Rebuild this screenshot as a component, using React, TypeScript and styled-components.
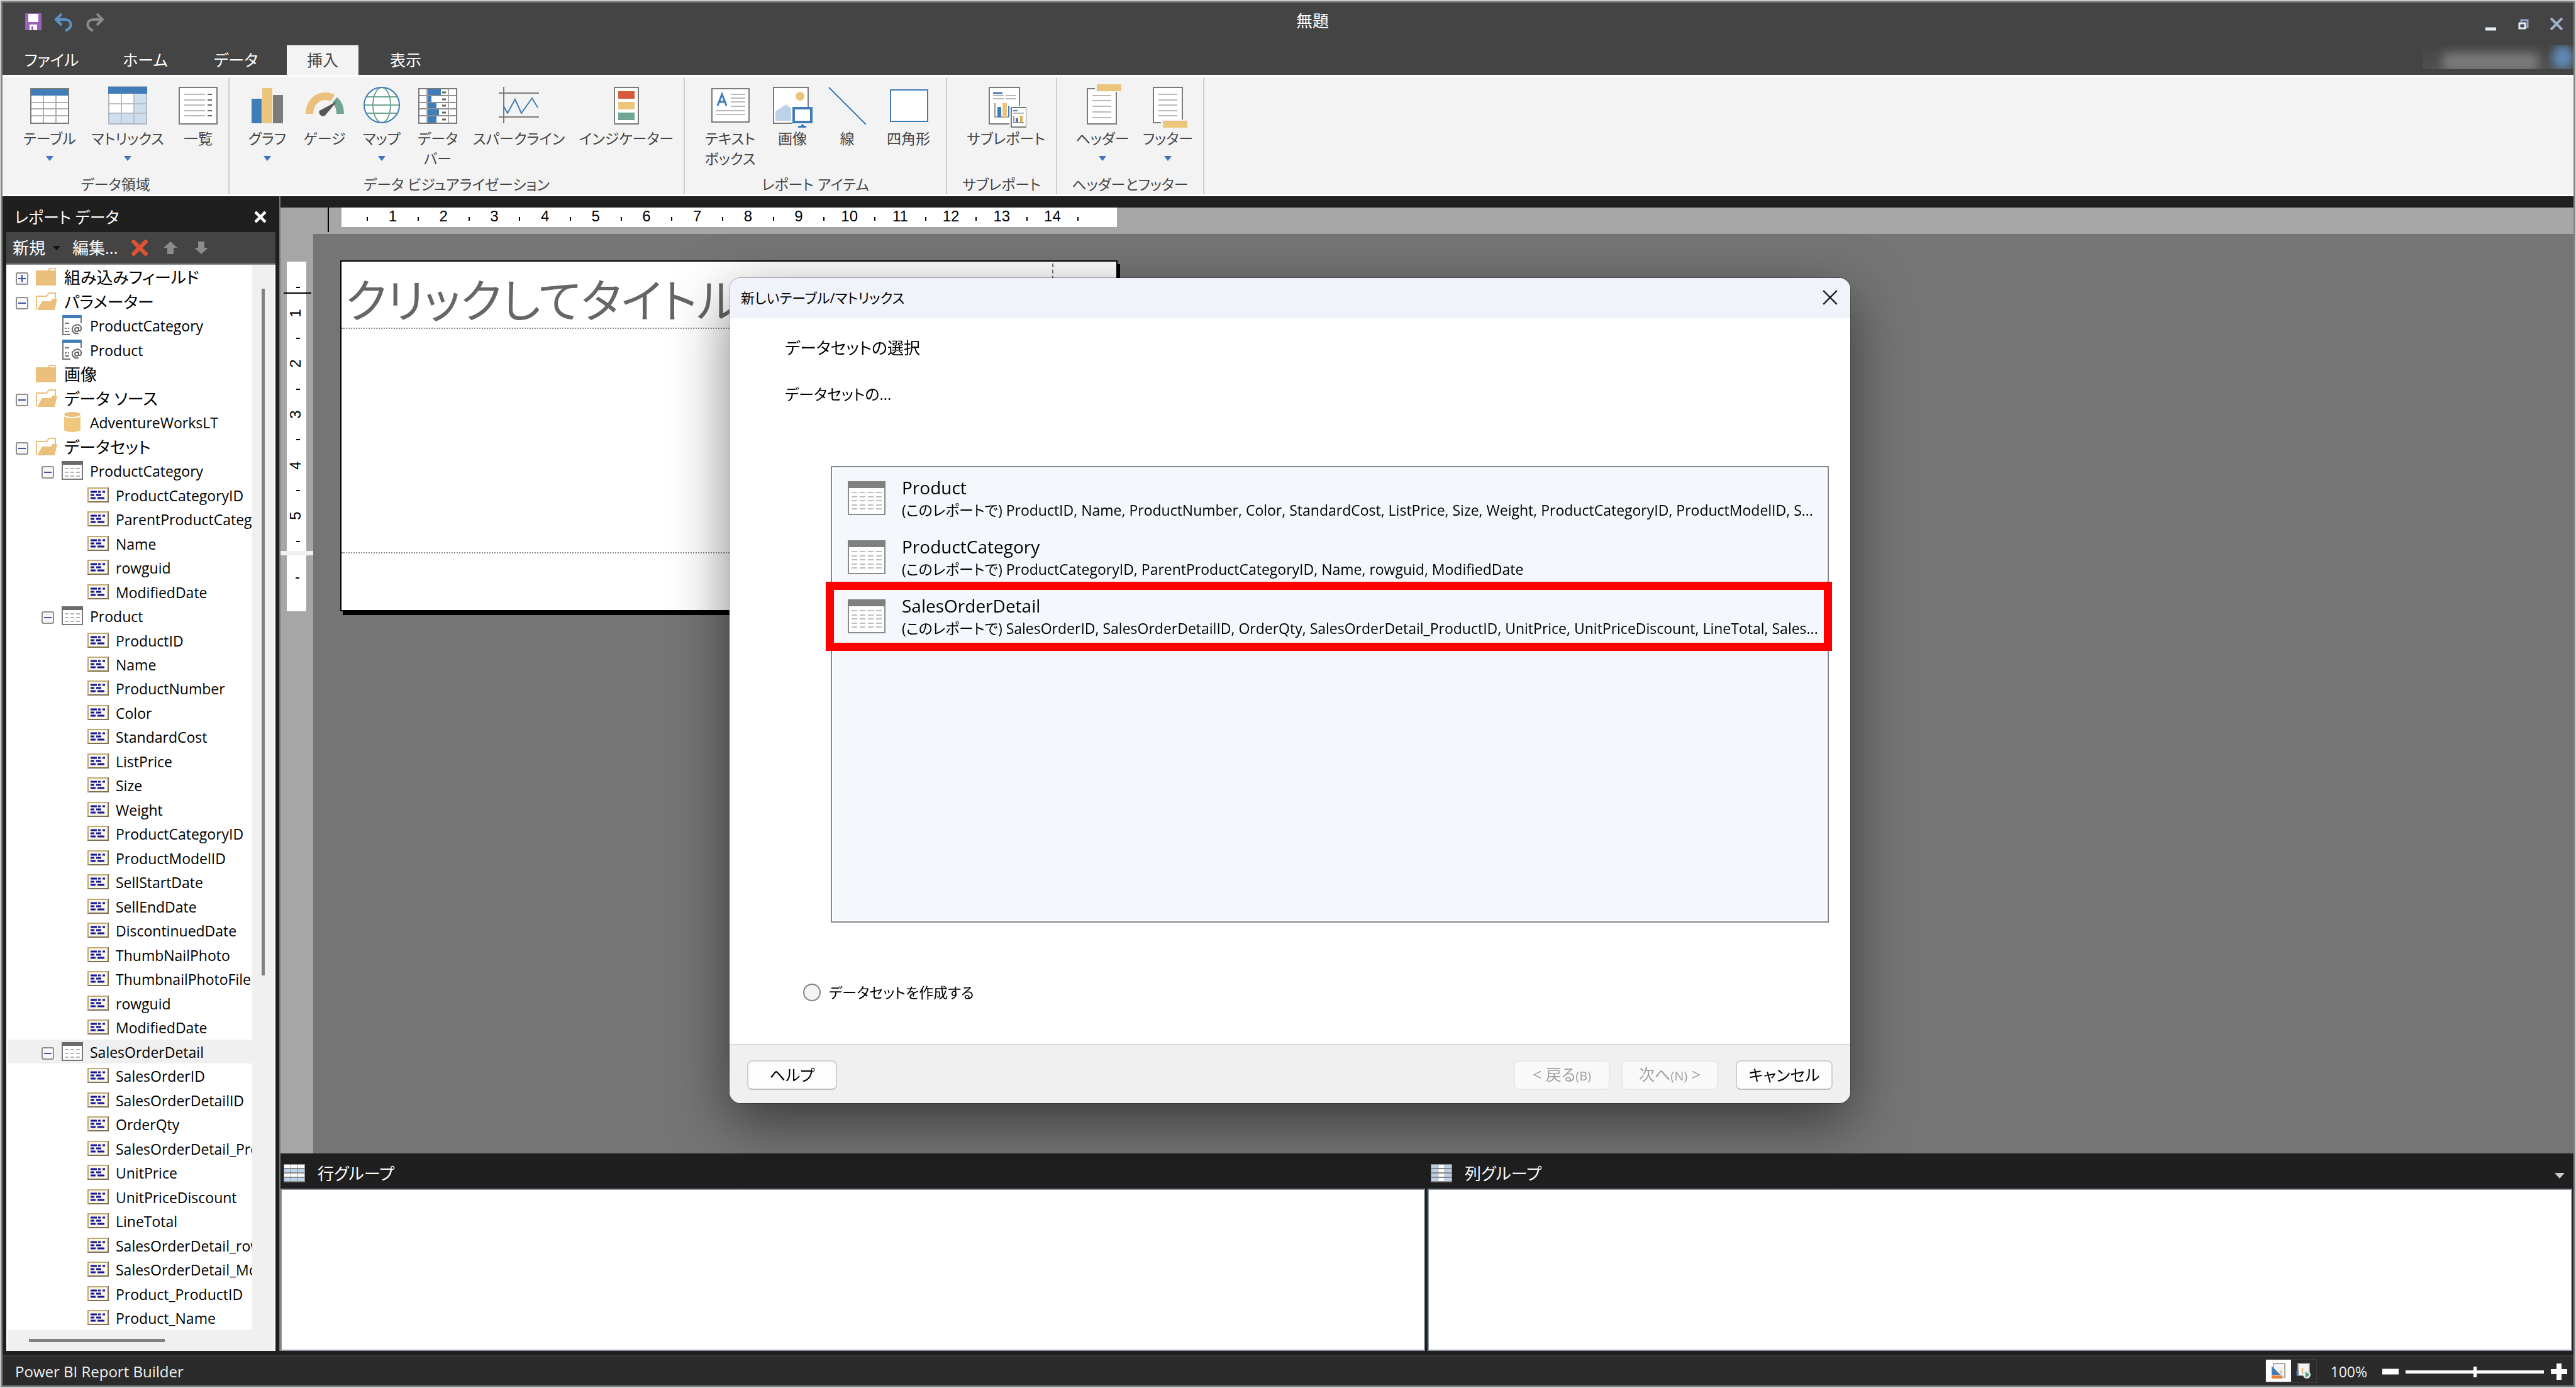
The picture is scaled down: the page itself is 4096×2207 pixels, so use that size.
import React from "react";
import styled, { createGlobalStyle } from "styled-components";

const GlobalStyle = createGlobalStyle`
  *, *::before, *::after { box-sizing: border-box; }
  body { margin: 0; }
  button, input { font: inherit; color: inherit; margin: 0; padding: 0; border: 0; background: none; }
  button { font-feature-settings: inherit; }
  ul { list-style: none; margin: 0; padding: 0; }
  h1, h2, p { margin: 0; font-weight: 400; }
  svg { display: block; flex: none; }
`;

/* ---------- window shell ---------- */

const Frame = styled.div`
  height: 100vh;
  padding: 1px;
  background: #e2e7e5;
  font-family: "Open Sans", "Noto Sans CJK JP", sans-serif;
  font-feature-settings: "palt";
  font-size: 24px;
  line-height: 32px;
  color: #444;
`;

const Window = styled.div`
  height: 100%;
  display: flex;
  flex-direction: column;
  border: 3px solid #828583;
  background: #1f1f1f;
  overflow: hidden;
`;

const TitleBar = styled.header`
  height: 68px;
  flex: none;
  display: grid;
  grid-template-columns: 1fr auto 1fr;
  background: #444;
  color: #fff;
`;

const QuickAccess = styled.div`
  display: flex;
  gap: 20px;
  padding: 17px 0 0 36px;
`;

const WindowTitle = styled.h1`
  font-size: 26px;
  line-height: 58px;
  padding-left: 78px;
`;

const WindowControls = styled.div`
  display: flex;
  justify-content: flex-end;
  gap: 34px;
  padding: 24px 17px 0 0;
`;

const IconButton = styled.button`
  display: flex;
  align-items: flex-start;
  justify-content: center;
`;

const TabRow = styled.nav`
  height: 47px;
  flex: none;
  display: flex;
  gap: 19px;
  padding-left: 11px;
  background: #444;
`;

const Tab = styled.button<{ $width: number; $active?: boolean }>`
  width: ${(p) => p.$width}px;
  font-size: 25px;
  line-height: 45px;
  white-space: nowrap;
  color: ${(p) => (p.$active ? "#444" : "#fff")};
  background: ${(p) => (p.$active ? "#f3f3f3" : "transparent")};
`;

const Account = styled.div`
  width: 240px;
  height: 38px;
  margin-left: auto;
  overflow: hidden;
  display: flex;
  align-items: center;
  justify-content: flex-end;
  gap: 22px;
  background: linear-gradient(#444, #505050);
`;

const AccountName = styled.div`
  width: 152px;
  height: 30px;
  margin-top: 16px;
  background: #7a7a7a;
  filter: blur(8px);
`;

const AccountPhoto = styled.div`
  width: 34px;
  height: 38px;
  border-radius: 50%;
  background: #6088b4;
  filter: blur(7px);
`;

/* ---------- ribbon ---------- */

const Ribbon = styled.div`
  height: 193px;
  flex: none;
  display: flex;
  background: #f3f3f3;
  border-top: 3px solid #fff;
  border-bottom: 3px solid #fff;
  font-size: 23px;
`;

const Group = styled.section<{ $width: number; $pad: number }>`
  width: ${(p) => p.$width}px;
  margin-top: 2px;
  padding-top: 8px;
  border-right: 2px solid #cfcfcf;
  display: flex;
  flex-direction: column;
  justify-content: space-between;
  & > div { padding-left: ${(p) => p.$pad}px; }
`;

const GroupItems = styled.div`
  display: flex;
`;

const GroupLabel = styled.p`
  text-align: center;
  white-space: nowrap;
`;

const RibbonButton = styled.button<{ $width: number }>`
  width: ${(p) => p.$width}px;
  display: flex;
  flex-direction: column;
  align-items: center;
  justify-content: flex-start;
  white-space: pre;
`;

const Caret = styled.span`
  margin-top: 12px;
  border: 6px solid transparent;
  border-top: 8px solid #3f74bf;
  border-bottom: 0;
`;

/* ---------- body ---------- */

const Body = styled.div`
  flex: 1;
  min-height: 0;
  display: flex;
  padding-bottom: 7px;
`;

const Sidebar = styled.aside`
  width: 442px;
  flex: none;
  display: flex;
  flex-direction: column;
  padding: 0 6px;
  border-right: 2px solid #777;
`;

const SidebarHeader = styled.div`
  height: 57px;
  flex: none;
  display: flex;
  align-items: center;
  justify-content: space-between;
  padding: 8px 15px 0 13px;
  font-size: 25px;
  color: #fff;
`;

const SidebarTools = styled.div`
  height: 52px;
  flex: none;
  display: flex;
  align-items: center;
  background: #444;
  border-bottom: 2px solid #8a8a8a;
  color: #fff;
  font-size: 26px;
  padding-left: 10px;
`;

const ToolButton = styled.button<{ $gap: number }>`
  display: flex;
  align-items: center;
  gap: 12px;
  margin-right: ${(p) => p.$gap}px;
`;

const ToolCaret = styled.span`
  border: 6px solid transparent;
  border-top: 7px solid #111;
  border-bottom: 0;
`;

const TreeArea = styled.div`
  flex: 1;
  min-height: 0;
  display: grid;
  grid-template-columns: minmax(0, 1fr) 35px;
  grid-template-rows: minmax(0, 1fr) 34px;
  background: #f0f0f0;
  border-left: 2px solid #fff;
  border-right: 2px solid #fff;
`;

const Tree = styled.ul`
  display: flex;
  flex-direction: column;
  background: #fff;
  overflow: hidden;
  color: #000;
`;

const TreeRow = styled.li<{ $depth: number; $selected?: boolean }>`
  flex: 1;
  min-height: 0;
  display: flex;
  align-items: center;
  padding-left: ${(p) => 13 + p.$depth * 41}px;
  background: ${(p) => (p.$selected ? "#f0f0f0" : "transparent")};
  white-space: nowrap;
`;

const Toggle = styled.span`
  width: 32px;
  flex: none;
  padding-top: 6px;
`;

const NodeIcon = styled.span`
  width: 45px;
  flex: none;
`;

const NodeLabel = styled.span<{ $large: boolean }>`
  font-size: ${(p) => (p.$large ? 26 : 23)}px;
  padding-top: 2px;
`;

const VScroll = styled.div`
  padding: 38px 0 0 15px;
`;

const VThumb = styled.div`
  width: 5px;
  height: 66%;
  background: #808080;
`;

const HScroll = styled.div`
  grid-column: 1 / -1;
  padding: 15px 0 0 34px;
`;

const HThumb = styled.div`
  width: 216px;
  height: 5px;
  background: #808080;
`;

const Workspace = styled.main`
  flex: 1;
  min-width: 0;
  display: flex;
  flex-direction: column;
  padding-top: 18px;
`;

const Designer = styled.div`
  flex: 1;
  min-height: 0;
  display: grid;
  grid-template-columns: 52px minmax(0, 1fr);
  grid-template-rows: 42px minmax(0, 1fr);
  background: #757575;
`;

const Corner = styled.div`
  background: #a6a6a6;
`;

const TopStrip = styled.div`
  display: flex;
  background: #a6a6a6;
`;

const CursorTick = styled.div`
  width: 2px;
  height: 39px;
  margin: 0 20px 0 23px;
  background: #000;
`;

const HRuler = styled.div`
  width: 1233px;
  height: 31px;
  display: grid;
  grid-template-columns: repeat(29, 1fr);
  justify-items: center;
  align-items: center;
  padding: 0 42px 4px 21px;
  background: #fff;
  color: #000;
`;

const rulerFont = `
  font-family: "Liberation Sans", sans-serif;
  font-size: 24px;
  line-height: 26px;
`;

const HMark = styled.span`
  ${rulerFont}
`;

const HDot = styled.span`
  width: 2px;
  height: 6px;
  margin-top: 8px;
  background: #000;
`;

const SideStrip = styled.div`
  background: #a6a6a6;
  padding-top: 44px;
`;

const VRuler = styled.div`
  position: relative;
  width: 31px;
  height: 556px;
  margin-left: 10px;
  display: grid;
  grid-template-rows: repeat(11, 1fr);
  justify-items: center;
  align-items: center;
  padding: 21px 0 91px;
  background: #fff;
  color: #000;
`;

const VMark = styled.span`
  ${rulerFont}
  transform: rotate(-90deg);
  padding-bottom: 4px;
`;

const VDot = styled.span`
  width: 6px;
  height: 2px;
  margin-left: 4px;
  background: #000;
`;

const VDotLast = styled(VDot)`
  position: absolute;
  bottom: 52px;
  left: 10px;
`;

const VCursor = styled.span`
  position: absolute;
  top: 49px;
  left: -5px;
  width: 44px;
  height: 2px;
  background: #000;
`;

const VSplit = styled.span`
  position: absolute;
  top: 460px;
  left: -10px;
  width: 52px;
  height: 7px;
  background: #f0f0f0;
`;

const Canvas = styled.div`
  padding: 42px 0 0 43px;
`;

const Page = styled.div`
  position: relative;
  width: 1236px;
  height: 558px;
  background: #fff;
  border: 2px solid #000;
  box-shadow: 4px 6px 0 #000;
  display: flex;
  flex-direction: column;
`;

const PageTitle = styled.p`
  height: 107px;
  padding-left: 6px;
  font-size: 73px;
  line-height: 122px;
  white-space: nowrap;
  overflow: hidden;
  color: #666;
  border-bottom: 2px dotted #8a8a8a;
`;

const PageBodyArea = styled.div`
  height: 357px;
  border-bottom: 2px dotted #8a8a8a;
`;

const PageGuide = styled.div`
  position: absolute;
  top: 3px;
  right: 100px;
  height: 104px;
  border-left: 2px dashed #777;
`;

const GroupPanes = styled.section`
  height: 314px;
  flex: none;
  display: grid;
  grid-template-columns: 1fr 1fr;
  column-gap: 4px;
  padding-right: 2px;
`;

const PaneColumn = styled.div`
  display: flex;
  flex-direction: column;
`;

const PaneHeader = styled.div`
  height: 56px;
  display: flex;
  align-items: center;
  gap: 20px;
  padding: 7px 12px 0 5px;
  font-size: 26px;
  color: #fff;
`;

const PaneBody = styled.div`
  flex: 1;
  background: #fff;
  border: 2px solid #8b93a0;
`;

const PaneCaret = styled.span`
  margin: 8px 0 0 auto;
  border: 8px solid transparent;
  border-top: 9px solid #c8c8c8;
  border-bottom: 0;
`;

/* ---------- status bar ---------- */

const StatusBar = styled.footer`
  height: 48px;
  flex: none;
  display: flex;
  align-items: center;
  padding: 2px 10px 0 20px;
  background: #2b2b2b;
  border-top: 2px solid #3a3a3a;
  color: #f0f0f0;
`;

const ViewSwitch = styled.div`
  display: flex;
  height: 38px;
  width: 82px;
  margin: 0 22px 2px auto;
  border: 1px solid #3c3c3c;
`;

const ViewButton = styled.button<{ $on?: boolean }>`
  width: 40px;
  height: 35px;
  display: flex;
  align-items: center;
  justify-content: center;
  background: ${(p) => (p.$on ? "#fff" : "transparent")};
`;

const ZoomText = styled.span`
  margin-right: 24px;
  font-size: 23px;
`;

const ZoomSlider = styled.input`
  appearance: none;
  width: 220px;
  height: 17px;
  margin: 0 11px;
  background: linear-gradient(#fff, #fff) center / 100% 5px no-repeat;
  &::-webkit-slider-thumb {
    appearance: none;
    width: 5px;
    height: 17px;
    background: #fff;
  }
`;

/* ---------- dialog ---------- */

const Overlay = styled.div`
  position: fixed;
  inset: 0;
  display: grid;
  place-items: center;
  padding: 0 0 12px 6px;
`;

const Dialog = styled.div`
  width: 1782px;
  height: 1312px;
  display: flex;
  flex-direction: column;
  background: #fff;
  border-radius: 18px;
  overflow: hidden;
  color: #000;
  box-shadow: 0 0 0 1px rgba(0, 0, 0, 0.3), 0 30px 90px rgba(0, 0, 0, 0.5);
`;

const DialogHeader = styled.div`
  height: 64px;
  flex: none;
  display: flex;
  align-items: center;
  justify-content: space-between;
  padding: 0 20px 2px 18px;
  background: #f1f3fa;
`;

const DialogTitle = styled.h2`
  font-size: 22px;
`;

const DialogBody = styled.div`
  flex: 1;
  padding: 28px 34px 0 88px;
`;

const Heading = styled.p`
  font-size: 26px;
  line-height: 38px;
`;

const Lead = styled.p`
  margin-top: 36px;
  font-size: 24px;
  line-height: 38px;
`;

const DatasetList = styled.ul`
  height: 726px;
  margin: 95px 0 0 73px;
  padding: 2px 0;
  background: #f4f7fc;
  border: 2px solid #828790;
  box-shadow: inset 0 0 0 2px #fff;
`;

const DatasetItem = styled.li`
  position: relative;
  height: 94px;
`;

const DatasetButton = styled.button`
  width: 100%;
  height: 94px;
  display: flex;
  align-items: center;
  gap: 26px;
  padding-left: 25px;
  text-align: left;
  white-space: nowrap;
`;

const DatasetText = styled.span`
  display: flex;
  flex-direction: column;
`;

const DatasetName = styled.span`
  font-size: 28px;
  line-height: 38px;
`;

const DatasetFields = styled.span`
  font-size: 23px;
  line-height: 34px;
`;

const Highlight = styled.span`
  position: absolute;
  inset: -8px -7px -8px -10px;
  border: 13px solid #f00;
  pointer-events: none;
`;

const CreateOption = styled.label`
  display: flex;
  align-items: center;
  gap: 13px;
  margin: 92px 0 0 29px;
  font-size: 23px;
  line-height: 38px;
`;

const Radio = styled.input`
  appearance: none;
  width: 28px;
  height: 28px;
  border: 2px solid #858585;
  border-radius: 50%;
  background: #f3f3f3;
`;

const DialogFooter = styled.div`
  height: 94px;
  flex: none;
  display: flex;
  gap: 18px;
  padding: 24px 28px 0;
  background: #f0f0f0;
  border-top: 2px solid #dcdcdc;
`;

const DialogButton = styled.button<{ $width: number; $push?: boolean }>`
  width: ${(p) => p.$width}px;
  height: 47px;
  margin-left: ${(p) => (p.$push ? "auto" : 0)};
  font-size: 25px;
  line-height: 40px;
  background: #fdfdfd;
  border: 2px solid #d0d0d0;
  border-bottom-color: #bdbdbd;
  border-radius: 8px;
  &:disabled {
    color: #a0a0a0;
    background: #f9f9f9;
    border-color: #e8e8e8;
  }
  &:last-child { margin-left: 10px; }
`;

const Key = styled.small`
  font-size: 20px;
`;

/* ---------- icons ---------- */

const BLUE = "#3f7cb8";
const GOLD = "#ecc57c";
const GREEN = "#6fa592";
const GREY = "#7b7b7b";
const LINE = "#b9b9b9";

const RIcon = ({ children }: { children: React.ReactNode }) => (
  <svg width="64" height="72" viewBox="0 0 64 72" fill="none">
    {children}
  </svg>
);

const rows = (x1: number, x2: number, ys: number[], w = 2, c = LINE) =>
  ys.map((y) => <path key={`${x1}-${y}`} d={`M${x1} ${y}H${x2}`} stroke={c} strokeWidth={w} />);

const icons = {
  table: (
    <RIcon>
      <rect x="2" y="9" width="60" height="55" fill="#fff" />
      <rect x="2" y="9" width="60" height="11" fill={BLUE} />
      {rows(2, 62, [31, 41, 52], 2, "#b0b0b0")}
      <path d="M22 20V64M42 20V64" stroke="#b0b0b0" strokeWidth="2" />
      <rect x="2" y="9" width="60" height="55" stroke={GREY} strokeWidth="2" />
    </RIcon>
  ),
  matrix: (
    <RIcon>
      <rect x="2" y="6" width="60" height="59" fill="#fff" />
      <path d="M42 17H62V65H2V48H42Z" fill="#cfdeee" />
      {rows(2, 62, [33, 48], 2, "#b8c0c8")}
      <path d="M22 17V65M42 17V65" stroke="#b8c0c8" strokeWidth="2" />
      <rect x="2" y="6" width="60" height="59" stroke="#b0b8c0" strokeWidth="2" />
      <rect x="1" y="6" width="62" height="11" fill={BLUE} />
    </RIcon>
  ),
  list: (
    <RIcon>
      <rect x="2" y="7" width="60" height="58" fill="#fff" stroke={GREY} strokeWidth="2" />
      {rows(10, 43, [18, 27, 35, 44, 52])}
      {rows(47, 54, [18, 27, 35, 44, 52], 2, "#666")}
    </RIcon>
  ),
  chart: (
    <RIcon>
      <rect x="7" y="25" width="16" height="39" fill={BLUE} />
      <rect x="24" y="8" width="16" height="56" fill={GOLD} />
      <rect x="41" y="19" width="16" height="45" fill={GREY} />
    </RIcon>
  ),
  gauge: (
    <RIcon>
      <path d="M8 49C8 34 18 21 33 21C38 21 42 22 45 24" stroke="#e9c07d" strokeWidth="12" />
      <path d="M48 27C54 32 57 40 57 49" stroke={GREEN} strokeWidth="12" />
      <path d="M52 29L35 49A6 6 0 1 1 24 44Z" fill="#555" />
    </RIcon>
  ),
  map: (
    <RIcon>
      <circle cx="32" cy="35" r="28" fill="#fff" />
      <path d="M8 22H56M4 35H60M8 48H56" stroke={GREEN} strokeWidth="2" />
      <ellipse cx="32" cy="35" rx="14" ry="28" stroke={GREEN} strokeWidth="2" />
      <circle cx="32" cy="35" r="28" stroke={BLUE} strokeWidth="2" />
    </RIcon>
  ),
  dataBar: (
    <RIcon>
      <rect x="2" y="9" width="60" height="55" fill="#fff" />
      <path d="M16 9H37V20H16ZM16 21H22V31H16ZM16 32H30V41H16ZM16 42H34V52H16ZM16 53H30V64H16Z" fill={BLUE} />
      {rows(2, 62, [20, 31, 41, 52], 2, "#8f8f8f")}
      {rows(39, 45, [15, 26, 36, 47, 58], 3, "#666")}
      <path d="M15 9V64M49 9V64" stroke="#a8a8a8" strokeWidth="2" />
      <rect x="2" y="9" width="60" height="55" stroke={GREY} strokeWidth="2" />
    </RIcon>
  ),
  sparkline: (
    <RIcon>
      <path d="M0 16H64M0 54H64M8 6V64" stroke={GREY} strokeWidth="2" />
      <path d="M8 37L14 48L26 26L36 48L53 24L62 39" stroke={BLUE} strokeWidth="2" />
    </RIcon>
  ),
  indicator: (
    <RIcon>
      <rect x="13" y="7" width="38" height="58" fill="#fff" stroke={GREY} strokeWidth="2" />
      <rect x="19" y="13" width="26" height="12" fill="#d65a3a" />
      <rect x="19" y="30" width="26" height="12" fill={GOLD} />
      <rect x="19" y="47" width="26" height="12" fill={GREEN} />
    </RIcon>
  ),
  textBox: (
    <RIcon>
      <rect x="3" y="9" width="59" height="53" fill="#fff" stroke={GREY} strokeWidth="2" />
      <path d="M12 36L19 18L26 36M14 30H24" stroke={BLUE} strokeWidth="3" />
      {rows(33, 56, [18, 24, 30, 37])}
      {rows(9, 56, [44, 50])}
    </RIcon>
  ),
  image: (
    <RIcon>
      <path d="M32 64H2V7H57V38" fill="#fff" />
      <path d="M32 64H2V7H57V38" stroke={GREY} strokeWidth="2" />
      <circle cx="44" cy="21" r="7" fill={GOLD} />
      <path d="M5 60V45L22 34L30 40V60Z" fill="#bdd1e8" />
      <rect x="34" y="40" width="28" height="22" fill="#fff" stroke={BLUE} strokeWidth="4" />
      <path d="M41 71V68H45L48 65L51 68H54V71Z" fill={BLUE} />
    </RIcon>
  ),
  line: (
    <RIcon>
      <path d="M3 7L62 66" stroke={BLUE} strokeWidth="2" />
    </RIcon>
  ),
  rectangle: (
    <RIcon>
      <rect x="3" y="11" width="59" height="50" fill="#fff" stroke={BLUE} strokeWidth="2" />
    </RIcon>
  ),
  subreport: (
    <RIcon>
      <path d="M38 65H5V7H53V36H38Z" fill="#fff" />
      <path d="M37 65H5V7H53V36" stroke={GREY} strokeWidth="2" />
      <path d="M11 16H26" stroke={BLUE} strokeWidth="3" />
      {rows(11, 28, [20, 25])}
      {rows(31, 48, [20, 25])}
      <path d="M14 32V54H36" stroke="#999" strokeWidth="2" />
      <rect x="18" y="38" width="6" height="16" fill={BLUE} />
      <rect x="26" y="32" width="7" height="22" fill={GOLD} />
      <path d="M36 36V54" stroke={BLUE} strokeWidth="2" />
      <rect x="40" y="39" width="24" height="31" fill="#fff" stroke={GREY} strokeWidth="2" />
      <path d="M43 44H50" stroke={BLUE} strokeWidth="2" />
      {rows(43, 60, [48])}
      <path d="M44 52V63H60" stroke="#999" strokeWidth="2" />
      <rect x="47" y="56" width="4" height="6" fill={BLUE} />
      <rect x="54" y="52" width="4" height="10" fill="#e6a954" />
    </RIcon>
  ),
  header: (
    <RIcon>
      <rect x="8" y="9" width="46" height="56" fill="#fff" stroke={GREY} strokeWidth="2" />
      {rows(16, 46, [20, 28, 37, 46, 55])}
      <rect x="20" y="2" width="43" height="12" fill="#f3f3f3" />
      <rect x="23" y="2" width="39" height="11" fill={GOLD} />
    </RIcon>
  ),
  footer: (
    <RIcon>
      <rect x="9" y="7" width="46" height="56" fill="#fff" stroke={GREY} strokeWidth="2" />
      {rows(17, 47, [18, 27, 35, 44, 52])}
      <rect x="21" y="58" width="43" height="14" fill="#f3f3f3" />
      <rect x="24" y="60" width="39" height="11" fill={GOLD} />
    </RIcon>
  ),
};

const ToggleIcon = ({ open }: { open: boolean }) => (
  <svg width="20" height="20" viewBox="0 0 20 20">
    <rect x="1" y="1" width="18" height="18" rx="2" fill="#f7f7f7" stroke="#8f8f8f" strokeWidth="2" />
    <path d={open ? "M4 10H16" : "M4 10H16M10 4V16"} stroke="#3c55a5" strokeWidth="2" />
  </svg>
);

const treeIcons = {
  folder: (
    <svg width="34" height="28" viewBox="0 0 34 28">
      <path d="M0 4H18L22 0H32V28H0Z" fill="#ebc07d" />
      <path d="M21 4L23 2H31V4Z" fill="#fff" />
    </svg>
  ),
  openFolder: (
    <svg width="34" height="28" viewBox="0 0 34 28">
      <path d="M1 27V6H17L21 1H31V10" fill="none" stroke="#ebc07d" strokeWidth="2" />
      <path d="M2 28L10 14H24L26 10H34L30 28Z" fill="#ebc07d" />
    </svg>
  ),
  parameter: (
    <svg width="34" height="34" viewBox="0 0 34 34" fill="none">
      <path d="M14 32H2V2H31V14" fill="#fff" stroke="#777" strokeWidth="2" />
      <rect x="1" y="1" width="31" height="5" fill={BLUE} />
      <path d="M5 14H12M5 22H8M10 22H12M5 27H12" stroke="#777" strokeWidth="2" />
      <circle cx="24" cy="24" r="3" stroke="#666" strokeWidth="2" />
      <path d="M27 20V26H30C34 18 26 14 20 18C14 22 17 32 27 30" stroke="#666" strokeWidth="2" />
    </svg>
  ),
  database: (
    <svg width="34" height="34" viewBox="0 0 34 34">
      <ellipse cx="17" cy="5" rx="13" ry="4" fill="#ebc07d" />
      <path d="M4 8C8 12 26 12 30 8V30C26 34 8 34 4 30Z" fill="#efc87f" />
    </svg>
  ),
  dataset: (
    <svg width="34" height="30" viewBox="0 0 34 30">
      <rect x="1" y="1" width="32" height="28" fill="#fff" stroke="#7a7a7a" strokeWidth="2" />
      <rect x="0" y="0" width="34" height="6" fill="#6b6b6b" />
      <path d="M5 12H29M5 18H29M5 24H29" stroke="#b5b5b5" strokeWidth="2" strokeDasharray="6 3" />
    </svg>
  ),
  field: (
    <svg width="34" height="24" viewBox="0 0 34 24">
      <rect x="1" y="1" width="32" height="22" fill="#fbf8ea" stroke="#7d6d52" strokeWidth="2" />
      <path d="M1 23V1H33" fill="none" stroke="#bfa878" strokeWidth="2" />
      <path d="M5 7H15M17 7H21M24 7H28M5 12H11M14 12H22M5 17H13M16 17H27" stroke="#15159a" strokeWidth="3" />
    </svg>
  ),
};

const DatasetIcon = () => (
  <svg width="60" height="54" viewBox="0 0 60 54">
    <rect x="1" y="1" width="58" height="52" fill="#fff" stroke="#8a8a8a" strokeWidth="2" />
    <rect x="0" y="0" width="60" height="11" fill="#808080" />
    <path d="M6 18H54M6 25H54M6 31H54M6 38H54M6 44H54" stroke="#bdbdbd" strokeWidth="2" strokeDasharray="9 4" />
  </svg>
);

const SaveIcon = () => (
  <svg width="26" height="27" viewBox="0 0 26 27">
    <path d="M0 0H26V27H0Z" fill="#9a62bb" />
    <path d="M5 1H21V14H5ZM7 18H19V27H7Z" fill="#fff" />
    <path d="M10 21H13V27H10Z" fill="#9a62bb" />
  </svg>
);

const UndoIcon = ({ flip, color }: { flip?: boolean; color: string }) => (
  <svg width="30" height="30" viewBox="0 0 30 30" fill="none">
    <g transform={flip ? "translate(30 0) scale(-1 1)" : undefined} stroke={color} strokeWidth="4">
      <path d="M12 1L3 10L12 19" />
      <path d="M3 10H18C28 11 31 22 18 28" />
    </g>
  </svg>
);

const Cross = ({ size, width, color }: { size: number; width: number; color: string }) => (
  <svg width={size} height={size} viewBox="0 0 20 20">
    <path d="M1 1L19 19M19 1L1 19" stroke={color} strokeWidth={width} />
  </svg>
);

const ArrowIcon = ({ down }: { down?: boolean }) => (
  <svg width="22" height="20" viewBox="0 0 22 20">
    <path d={down ? "M11 20L0 10H6V0H16V10H22Z" : "M11 0L0 10H6V20H16V10H22Z"} fill="#8c8c8c" />
  </svg>
);

const GridIcon = ({ tinted }: { tinted: (row: number, col: number) => boolean }) => (
  <svg width="34" height="29" viewBox="0 0 34 29">
    <rect width="34" height="29" fill="#8a8a8a" />
    {[0, 1, 2].map((c) =>
      [0, 1, 2, 3].map((r) => (
        <rect key={`${c}${r}`} x={1 + c * 11} y={1 + r * 7} width="10" height="5" fill={tinted(r, c) ? "#bcd4ee" : "#fff"} />
      ))
    )}
  </svg>
);

/* ---------- data ---------- */

type RibbonItem = { icon: keyof typeof icons; label: string; width: number; menu?: boolean };
type RibbonGroup = { label: string; width: number; pad: number; items: RibbonItem[] };

const ribbon: RibbonGroup[] = [
  {
    label: "データ領域", width: 361, pad: 15,
    items: [
      { icon: "table", label: "テーブル", width: 120, menu: true },
      { icon: "matrix", label: "マトリックス", width: 128, menu: true },
      { icon: "list", label: "一覧", width: 96 },
    ],
  },
  {
    label: "データ ビジュアライゼーション", width: 724, pad: 10,
    items: [
      { icon: "chart", label: "グラフ", width: 100, menu: true },
      { icon: "gauge", label: "ゲージ", width: 82 },
      { icon: "map", label: "マップ", width: 100, menu: true },
      { icon: "dataBar", label: "データ\nバー", width: 78 },
      { icon: "sparkline", label: "スパークライン", width: 180 },
      { icon: "indicator", label: "インジケーター", width: 162 },
    ],
  },
  {
    label: "レポート アイテム", width: 417, pad: 22,
    items: [
      { icon: "textBox", label: "テキスト\nボックス", width: 100 },
      { icon: "image", label: "画像", width: 98 },
      { icon: "line", label: "線", width: 76 },
      { icon: "rectangle", label: "四角形", width: 119 },
    ],
  },
  {
    label: "サブレポート", width: 175, pad: 14,
    items: [{ icon: "subreport", label: "サブレポート", width: 159 }],
  },
  {
    label: "ヘッダーとフッター", width: 234, pad: 20,
    items: [
      { icon: "header", label: "ヘッダー", width: 104, menu: true },
      { icon: "footer", label: "フッター", width: 104, menu: true },
    ],
  },
];

type Node = { label: string; icon: keyof typeof treeIcons; depth: number; open?: boolean; selected?: boolean };

const fields = (names: string): Node[] =>
  names.split(" ").map((label) => ({ label, icon: "field", depth: 2 }));

const nodes: Node[] = [
  { label: "組み込みフィールド", icon: "folder", depth: 0, open: false },
  { label: "パラメーター", icon: "openFolder", depth: 0, open: true },
  { label: "ProductCategory", icon: "parameter", depth: 1 },
  { label: "Product", icon: "parameter", depth: 1 },
  { label: "画像", icon: "folder", depth: 0 },
  { label: "データ ソース", icon: "openFolder", depth: 0, open: true },
  { label: "AdventureWorksLT", icon: "database", depth: 1 },
  { label: "データセット", icon: "openFolder", depth: 0, open: true },
  { label: "ProductCategory", icon: "dataset", depth: 1, open: true },
  ...fields("ProductCategoryID ParentProductCategoryID Name rowguid ModifiedDate"),
  { label: "Product", icon: "dataset", depth: 1, open: true },
  ...fields(
    "ProductID Name ProductNumber Color StandardCost ListPrice Size Weight ProductCategoryID ProductModelID SellStartDate SellEndDate DiscontinuedDate ThumbNailPhoto ThumbnailPhotoFileName rowguid ModifiedDate"
  ),
  { label: "SalesOrderDetail", icon: "dataset", depth: 1, open: true, selected: true },
  ...fields(
    "SalesOrderID SalesOrderDetailID OrderQty SalesOrderDetail_ProductID UnitPrice UnitPriceDiscount LineTotal SalesOrderDetail_rowguid SalesOrderDetail_ModifiedDate Product_ProductID Product_Name"
  ),
];

const datasets = [
  {
    name: "Product",
    fields: "(このレポートで) ProductID, Name, ProductNumber, Color, StandardCost, ListPrice, Size, Weight, ProductCategoryID, ProductModelID, S...",
  },
  {
    name: "ProductCategory",
    fields: "(このレポートで) ProductCategoryID, ParentProductCategoryID, Name, rowguid, ModifiedDate",
  },
  {
    name: "SalesOrderDetail",
    fields: "(このレポートで) SalesOrderID, SalesOrderDetailID, OrderQty, SalesOrderDetail_ProductID, UnitPrice, UnitPriceDiscount, LineTotal, Sales...",
    highlight: true,
  },
];

/* ---------- app ---------- */

const ReportData = () => (
  <Sidebar>
    <SidebarHeader>
      <span>レポート データ</span>
      <IconButton aria-label="閉じる"><Cross size={18} width={5} color="#fff" /></IconButton>
    </SidebarHeader>
    <SidebarTools>
      <ToolButton $gap={19}>新規<ToolCaret /></ToolButton>
      <ToolButton $gap={21}>編集...</ToolButton>
      <ToolButton $gap={25} aria-label="削除"><Cross size={26} width={5} color="#dd5333" /></ToolButton>
      <ToolButton $gap={27} aria-label="上へ"><ArrowIcon /></ToolButton>
      <ToolButton $gap={0} aria-label="下へ"><ArrowIcon down /></ToolButton>
    </SidebarTools>
    <TreeArea>
      <Tree>
        {nodes.map((n, i) => (
          <TreeRow key={i} $depth={n.depth} $selected={n.selected}>
            <Toggle>{n.open !== undefined && <ToggleIcon open={n.open} />}</Toggle>
            <NodeIcon>{treeIcons[n.icon]}</NodeIcon>
            <NodeLabel $large={n.depth === 0}>{n.label}</NodeLabel>
          </TreeRow>
        ))}
      </Tree>
      <VScroll><VThumb /></VScroll>
      <HScroll><HThumb /></HScroll>
    </TreeArea>
  </Sidebar>
);

const ReportDesigner = () => (
  <Designer>
    <Corner />
    <TopStrip>
      <CursorTick />
      <HRuler>
        {Array.from({ length: 29 }, (_, i) =>
          i % 2 ? <HMark key={i}>{(i + 1) / 2}</HMark> : <HDot key={i} />
        )}
      </HRuler>
    </TopStrip>
    <SideStrip>
      <VRuler>
        {Array.from({ length: 11 }, (_, i) =>
          i % 2 ? <VMark key={i}>{(i + 1) / 2}</VMark> : <VDot key={i} />
        )}
        <VDotLast />
        <VCursor />
        <VSplit />
      </VRuler>
    </SideStrip>
    <Canvas>
      <Page>
        <PageTitle>クリックしてタイトルを追加</PageTitle>
        <PageBodyArea />
        <PageGuide />
      </Page>
    </Canvas>
  </Designer>
);

const NewTableDialog = () => (
  <Overlay>
    <Dialog role="dialog" aria-labelledby="dialog-title">
      <DialogHeader>
        <DialogTitle id="dialog-title">新しいテーブル/マトリックス</DialogTitle>
        <IconButton aria-label="閉じる"><Cross size={24} width={2} color="#222" /></IconButton>
      </DialogHeader>
      <DialogBody>
        <Heading>データセットの選択</Heading>
        <Lead>データセットの...</Lead>
        <DatasetList>
          {datasets.map((d) => (
            <DatasetItem key={d.name}>
              <DatasetButton>
                <DatasetIcon />
                <DatasetText>
                  <DatasetName>{d.name}</DatasetName>
                  <DatasetFields>{d.fields}</DatasetFields>
                </DatasetText>
              </DatasetButton>
              {d.highlight && <Highlight />}
            </DatasetItem>
          ))}
        </DatasetList>
        <CreateOption>
          <Radio type="radio" name="source" />
          データセットを作成する
        </CreateOption>
      </DialogBody>
      <DialogFooter>
        <DialogButton $width={143}>ヘルプ</DialogButton>
        <DialogButton $width={153} $push disabled>&lt; 戻る<Key>(B)</Key></DialogButton>
        <DialogButton $width={154} disabled>次へ<Key>(N)</Key> &gt;</DialogButton>
        <DialogButton $width={154}>キャンセル</DialogButton>
      </DialogFooter>
    </Dialog>
  </Overlay>
);

export default function App() {
  return (
    <Frame>
      <GlobalStyle />
      <Window>
        <TitleBar>
          <QuickAccess>
            <IconButton aria-label="保存"><SaveIcon /></IconButton>
            <IconButton aria-label="元に戻す"><UndoIcon color="#5b93c9" /></IconButton>
            <IconButton aria-label="やり直し"><UndoIcon flip color="#8a8a8a" /></IconButton>
          </QuickAccess>
          <WindowTitle>無題</WindowTitle>
          <WindowControls>
            <IconButton aria-label="最小化">
              <svg width="18" height="24" viewBox="0 0 18 24"><path d="M0 18H17" stroke="#e8eef8" strokeWidth="5" /></svg>
            </IconButton>
            <IconButton aria-label="元のサイズに戻す">
              <svg width="17" height="20" viewBox="0 0 17 20" fill="none">
                <path d="M5 7V4H15V15H11" stroke="#8fa5ca" strokeWidth="3" />
                <rect x="2" y="9" width="9" height="8" stroke="#e6edf8" strokeWidth="3" />
              </svg>
            </IconButton>
            <IconButton aria-label="閉じる"><Cross size={20} width={4} color="#a3b3cc" /></IconButton>
          </WindowControls>
        </TitleBar>
        <TabRow>
          <Tab $width={134}>ファイル</Tab>
          <Tab $width={126}>ホーム</Tab>
          <Tab $width={124}>データ</Tab>
          <Tab $width={114} $active>挿入</Tab>
          <Tab $width={112}>表示</Tab>
          <Account><AccountName /><AccountPhoto /></Account>
        </TabRow>
        <Ribbon>
          {ribbon.map((g) => (
            <Group key={g.label} $width={g.width} $pad={g.pad}>
              <GroupItems>
                {g.items.map((it) => (
                  <RibbonButton key={it.label} $width={it.width}>
                    {icons[it.icon]}
                    {it.label}
                    {it.menu && <Caret />}
                  </RibbonButton>
                ))}
              </GroupItems>
              <GroupLabel>{g.label}</GroupLabel>
            </Group>
          ))}
        </Ribbon>
        <Body>
          <ReportData />
          <Workspace>
            <ReportDesigner />
            <GroupPanes>
              <PaneColumn>
                <PaneHeader><GridIcon tinted={(r) => r % 2 === 1} />行グループ</PaneHeader>
                <PaneBody />
              </PaneColumn>
              <PaneColumn>
                <PaneHeader><GridIcon tinted={(_, c) => c !== 1} />列グループ<PaneCaret /></PaneHeader>
                <PaneBody />
              </PaneColumn>
            </GroupPanes>
          </Workspace>
        </Body>
        <StatusBar>
          <span>Power BI Report Builder</span>
          <ViewSwitch>
            <ViewButton $on aria-label="デザイン">
              <svg width="24" height="26" viewBox="0 0 24 26" fill="none">
                <path d="M4 1H22V23H4Z" fill="#f4f4f4" stroke="#aaa" strokeWidth="2" />
                <path d="M1 5L15 19H1Z" fill="#3f7cb8" />
                <path d="M16 12V18" stroke={GOLD} strokeWidth="3" />
                <rect x="1" y="20" width="17" height="5" fill="#ea8136" />
              </svg>
            </ViewButton>
            <ViewButton aria-label="実行">
              <svg width="24" height="26" viewBox="0 0 24 26" fill="none">
                <path d="M3 1H21V20H3Z" fill="#f4f4f4" stroke="#999" strokeWidth="2" />
                <path d="M2 12V20" stroke="#3f7cb8" strokeWidth="3" />
                <path d="M10 8V17" stroke={GOLD} strokeWidth="3" />
                <circle cx="17" cy="19" r="6" fill="#e6e6e6" />
                <path d="M15 14L21 19L15 24Z" fill="#3f9c76" />
              </svg>
            </ViewButton>
          </ViewSwitch>
          <ZoomText>100%</ZoomText>
          <IconButton aria-label="縮小">
            <svg width="26" height="26" viewBox="0 0 26 26"><path d="M0 13H26" stroke="#fff" strokeWidth="9" /></svg>
          </IconButton>
          <ZoomSlider type="range" min="0" max="100" defaultValue="50" aria-label="ズーム" />
          <IconButton aria-label="拡大">
            <svg width="26" height="26" viewBox="0 0 26 26"><path d="M0 13H26M13 0V26" stroke="#fff" strokeWidth="8" /></svg>
          </IconButton>
        </StatusBar>
      </Window>
      <NewTableDialog />
    </Frame>
  );
}
